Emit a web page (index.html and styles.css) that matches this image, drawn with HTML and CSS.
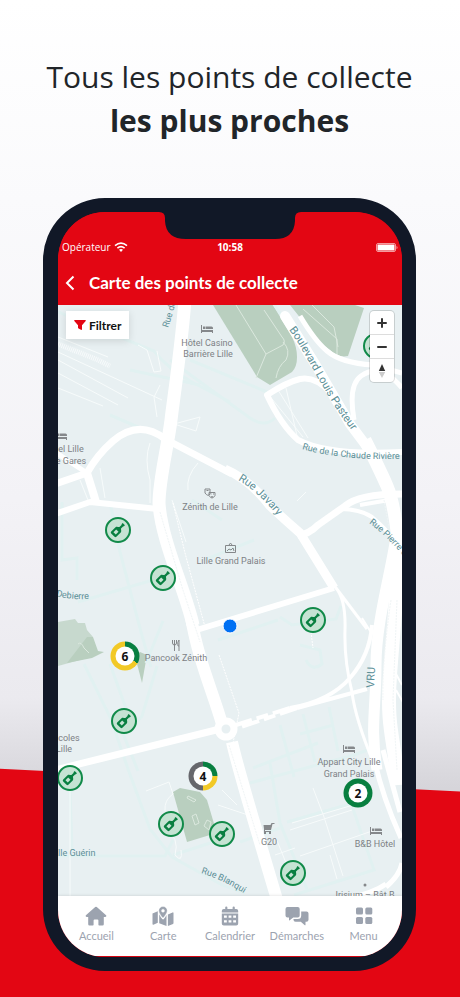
FILE: index.html
```html
<!DOCTYPE html>
<html lang="fr">
<head>
<meta charset="utf-8">
<meta name="viewport" content="width=device-width, initial-scale=1">
<title>Carte des points de collecte</title>
<link rel="stylesheet" href="styles.css">
</head>
<body>
<svg class="sprite" aria-hidden="true">
  <symbol id="bottle" viewBox="0 0 24 24">
    <g transform="rotate(45 12 12)">
      <path fill="#087f40" fill-rule="evenodd" d="M10.300 3h3.400v2h-.5v3.200c0 1.200 2.800 1.600 2.800 3.600v6.700a1.400 1.400 0 0 1-1.400 1.400H9.400A1.400 1.400 0 0 1 8 18.500v-6.700c0-2 2.800-2.400 2.800-3.600V5h-.5zM10.200 13v4.200h3.600V13z"/>
    </g>
  </symbol>
  <symbol id="bed" viewBox="0 0 14 10">
    <path fill="#85888b" d="M1 1h1v5h11v3h-1V8H2v1H1zM3 2.500h2.500V5H3zM6 2.500h5.500Q13 2.500 13 4v1H6z"/>
  </symbol>
</svg>
<main class="stage">
  <h1 class="headline">Tous les points de collecte <strong>les plus proches</strong></h1>

  <div class="phone">
    <svg class="notch" viewBox="0 0 142 29" aria-hidden="true"><path fill="#111827" d="M0 0h142v1q-6 0-6 6v3q-1 18-20 18H27Q7 28 6 10V7Q6 1 0 1z"/></svg>
    <div class="screen">
      <header class="top">
        <div class="status">
          <div class="carrier">
            <span>Opérateur</span>
            <svg width="14" height="10" viewBox="0 0 14 10" aria-hidden="true"><g fill="none" stroke="#fff" stroke-width="1.600"><path d="M1 3.700q6-5 12 0"/><path d="M3.400 6.200q3.600-3 7.200 0"/></g><path fill="#fff" d="M5 7.800q2-1.500 4 0L7 10z"/></svg>
          </div>
          <span class="clock">10:58</span>
          <svg class="battery" width="22" height="9" viewBox="0 0 22 9" aria-hidden="true"><rect x=".5" y=".5" width="19" height="8" rx="1.500" fill="none" stroke="#f59a9e"/><rect x="1.500" y="1.500" width="17" height="6" rx=".5" fill="#fff"/><path fill="#f59a9e" d="M20.500 3q1 0 1 1.500t-1 1.500z"/></svg>
        </div>
        <div class="titlebar">
          <button class="back" type="button" aria-label="Retour"><svg width="10" height="16" viewBox="0 0 10 16"><path d="M8.500 1.500 2 8l6.500 6.500" fill="none" stroke="#fff" stroke-width="2"/></svg></button>
          <h2 class="title">Carte des points de collecte</h2>
        </div>
      </header>

      <section class="map" aria-label="Carte">
        <svg class="ground" viewBox="58 305 344 591" preserveAspectRatio="xMidYMid slice">
          <defs>
            <path id="p-pasteur" d="M289 330C305 350 321 390 350 428L362 446"/>
            <path id="p-chaude" d="M302 449Q340 460 394 459L415 458"/>
            <path id="p-javary" d="M238 480Q257 491 276 514L284 526"/>
            <path id="p-pierre" d="M369 523Q390 538 412 567L425 586"/>
            <path id="p-blanqui" d="M201 873Q224 880 250 897"/>
            <path id="p-rued" d="M168 328Q174 311 179 290"/>
            <path id="p-debierre" d="M56 596Q75 601 98 598"/>
          </defs>
          <rect x="0" y="200" width="520" height="800" fill="#e8f0f2"/>

          <g fill="#b9cfbf">
            <path d="M213 305h60l19 32q5 10 5 20t-5 15l-22 13-13-8z"/>
            <path d="M290 305h65l9 3-16 48q-10 2-18-6-12-8-20-20z"/>
            <path opacity=".7" d="M58 622l17-3 3 4h7l2 7 6 7-6 21-29 8z"/>
            <path d="M67 663l20-26h6l5 14 6 1-12 6z"/>
            <path d="M135 656l5-4 7 3-5 28z"/>
            <path d="M173 792l7-4 20 4 7 8 8 27-5 8-23 7z"/>
          </g>

          <g fill="none" stroke="#e1f1f1" stroke-width="3">
            <path d="M58 312l96 39q14 18 38 31l38 20M170 360l80 58q15 10 25 0M190 360l77 32M273 303l50 72M110 502l10 50 21 80 10 35M62 502v58l15-2v22M78 602l75-22M84 664l27 55 17 50 22 60 22 28 50 28 23 8M110 664l18 50M157 666l-15 50-13 15M146 663l17-42M58 856h107l8-16M70 790l2 60M118 721l20 50"/>
            <path d="M253 768l65-25M250 783l104-28 22-8M270 763l10 60 27 66M287 822l70-20M280 725l14 52M303 714l12 48M300 734l34-9M329 707l9 44M240 842l40-14M173 855l56-18M350 800l24 70-80 25M300 645l20 5 2 14q-10 8-16-4M280 617l12 8 44-6 5-13"/>
            <path d="M218 640l60-20M130 370l70 15M110 415l35 15M192 500l30 20M204 560l50-20"/>
          </g>
          <path d="M58 344l40 16 12 6" fill="none" stroke="#f7fafb" stroke-width="5" stroke-dasharray="1 1"/>
          <g fill="none" stroke="#f7fbfb" stroke-width="1">
            <path d="M58 337l50 20M58 352l104 48M58 360l70 38M58 373l60 32M58 388l45 18M138 345l9 5 7 22 7-1-4-20M160 385l-6 12 3 20M174 424l26-7-4 14-22-7M150 443q-6 16 0 37v23M198 463q-12 13-10 27M172 500l14 42M100 468l5 30M80 480l8 20M278 390l30 48M286 388l12 52M268 394l35 43"/>
            <path d="M146 791l23-9 4 12q-9 6-8 17M165 828q15 10 10 27 8 9 6-5M70 790v106M292 823l68-20M290 830l62-20M300 856l75-26M313 788l11 29 19 59M330 855l7 24M276 838l18 45M275 855l20-7M297 501l9-9M218 805l30 10M222 790l15 15"/>
          </g>
          <g fill="none" stroke="#dbe8de" stroke-width="1"><path d="M236 305l30 49-10 24M266 354l17-9q3-4-1-8l-18-27M283 342q8 8 3 18-8 6-10 18M303 309l34 30v17M312 305l22 22 4 20M188 796l8 4-2 2-7-4zM192 816l4-2 3 9-4 2zM204 826l3-6 4 2-2 8zM78 644q3-3 6 4l5 5"/></g>

          <g fill="none" stroke="#fff" stroke-linejoin="round">
            <path stroke-width="13" d="M185 300C181 350 174 395 171 420S159 480 159 503C161 540 186 592 193 625"/>
            <path stroke-width="12" d="M191 617C198 660 214 695 222 724M232 742C238 770 258 835 278 903"/>
            <path stroke-width="7" d="M55 484l32-11q10-18 26-32 26-22 52-2L232 474"/>
            <path stroke-width="5" d="M55 452l32 21"/>
            <path stroke-width="8" d="M87 473l9 29"/>
            <path stroke-width="6" d="M55 514l35-12 68 7"/>
            <path stroke-width="9" d="M225 469Q250 480 270 506 285 520 300 533L334 588"/>
            <path stroke-width="6" d="M190 632L334 588"/>
            <path stroke-width="7" d="M55 770L220 729"/>
            <path stroke-width="7" d="M298 535q10 0 20-10l27-19q14-12 57-12"/>
            <path stroke-width="4" d="M340 509q20 0 32 8 14 12 30 31M360 505l35-6"/>
            <path stroke-width="3" d="M333 584l34 45M336 588q10 12 9 42t7 62q3 26 22 72"/>
            <path stroke-width="10" stroke-linecap="round" d="M285 316l30 48 35 60 27 36"/>
            <path stroke-width="13" d="M365 440Q380 470 387 486T398 540"/>
            <path stroke-width="5" d="M300 316q15 25 27 35 14 12 46 14l29 8M354 420q-6-35 7-44 20-14 41 12"/>
            <path stroke-width="6" d="M330 392q-15-16-30-13-13 3-33 16 14 30 31 45 30 16 104 12"/>
            <path stroke-width="11" d="M397 530C392 570 376 620 376 665S370 725 377 770"/>
            <path stroke-width="14" d="M398 530C399 580 394 620 390 675S395 740 398 785"/>
            <path stroke-width="5" d="M374 758q8 38 27 80M383 750l17 62M386 887q14-12 16-24M340 900q32-6 46-16"/>
            <path stroke-width="4" d="M372 625Q370 655 350 678T290 708M367 689l-70 19"/>
            <path stroke-width="4" stroke-dasharray="18 5 12 5" d="M290 708L236 725M297 708L238 728"/>
            <path stroke-width="2" d="M362 618l10 16M395 672l7 13M396 690l8 14"/>
          </g>
          <g fill="none" stroke="#f0f5f6" stroke-dasharray="2 1"><path d="M384 500l8 45M391 600q-9 60-8 100M397 600l-4 100 4 70M160 512l22 75 18 55M229 745l31 100"/></g>
          <path d="M173 503l12 50 20 74M219 655l20 58-6 30M311 632l2 16" fill="none" stroke="#fff" stroke-dasharray="2 1"/>
          <circle cx="226" cy="729" r="8" fill="#e8f0f2" stroke="#fff" stroke-width="7"/>

          <g class="place" text-anchor="middle">
            <text x="207" y="346">Hôtel Casino</text><text x="208" y="357">Barrière Lille</text>
            <text x="210" y="510">Zénith de Lille</text>
            <text x="231" y="564">Lille Grand Palais</text>
            <text x="176" y="661">Pancook Zénith</text>
            <text x="349" y="765">Appart City Lille</text><text x="349" y="777">Grand Palais</text>
            <text x="269" y="845">G20</text>
            <text x="375" y="847">B&amp;B Hôtel</text>
            <text x="365" y="898">Irisium – Bât B</text>
            <text x="71" y="452">el Lille</text><text x="71" y="464">e Gares</text>
            <text x="69" y="741">coles</text><text x="64" y="752">Lille</text>
          </g>
          <g class="street">
            <text x="58" y="856">lle Guérin</text>
            <text><textPath href="#p-debierre">Debierre</textPath></text>
            <text><textPath href="#p-chaude">Rue de la Chaude Rivière</textPath></text>
            <text><textPath href="#p-pierre">Rue Pierre de</textPath></text>
            <text><textPath href="#p-rued">Rue de</textPath></text>
            <text><textPath href="#p-blanqui">Rue Blanqui</textPath></text>
            <text class="avenue"><textPath href="#p-pasteur">Boulevard Louis Pasteur</textPath></text>
            <text class="avenue"><textPath href="#p-javary">Rue Javary</textPath></text>
            <text class="avenue" transform="translate(374 688) rotate(-87)">VRU</text>
          </g>

          <use href="#bed" x="200" y="324" width="14" height="10"/>
          <use href="#bed" x="54" y="431" width="14" height="10"/>
          <use href="#bed" x="342" y="744" width="14" height="10"/>
          <use href="#bed" x="369" y="826" width="14" height="10"/>
          <g fill="none" stroke="#85888b">
            <path d="M205 489h5v5q-2 3-5-1zM209 492.500h6v3q-3 5-6 0zM206.500 490.500h2M210.500 494h1M213 494h1M211 497q1-1 2 0"/>
            <path d="M225.500 545.500h10v7h-10zM229 545l1.500-2 1.500 2M227 551l2-2 2 1 2-2 1 3"/>
            <path d="M172.500 640v3q0 2 2 2t2-2v-3M174.500 640v11M179 651v-11q-2 2-1 6h1"/>
          </g>
          <path fill="#85888b" d="M263.500 825h7l1-2h3v1h-2l-1.500 6h-6v1h6v1h-7v-3zM264 832h2v2h-2zM269 832h2v2h-2z"/>
          <circle cx="365" cy="885" r="1.500" fill="#85888b"/>
        </svg>

        <button class="pin" style="--x:318;--y:41" type="button" aria-label="Point verre"><svg><use href="#bottle"/></svg></button>
        <button class="pin" style="--x:60;--y:225" type="button" aria-label="Point verre"><svg><use href="#bottle"/></svg></button>
        <button class="pin" style="--x:105;--y:273" type="button" aria-label="Point verre"><svg><use href="#bottle"/></svg></button>
        <button class="pin" style="--x:255;--y:315" type="button" aria-label="Point verre"><svg><use href="#bottle"/></svg></button>
        <button class="pin" style="--x:66;--y:416" type="button" aria-label="Point verre"><svg><use href="#bottle"/></svg></button>
        <button class="pin" style="--x:12;--y:473" type="button" aria-label="Point verre"><svg><use href="#bottle"/></svg></button>
        <button class="pin" style="--x:113;--y:519" type="button" aria-label="Point verre"><svg><use href="#bottle"/></svg></button>
        <button class="pin" style="--x:164;--y:529" type="button" aria-label="Point verre"><svg><use href="#bottle"/></svg></button>
        <button class="pin" style="--x:235;--y:568" type="button" aria-label="Point verre"><svg><use href="#bottle"/></svg></button>
        <button class="cluster third" style="--x:67;--y:351" type="button"><span>6</span></button>
        <button class="cluster mixed" style="--x:145;--y:471" type="button"><span>4</span></button>
        <button class="cluster" style="--x:300;--y:488" type="button"><span>2</span></button>
        <span class="me" style="--x:172;--y:321"></span>

        <button class="filter" type="button"><svg width="12" height="10" viewBox="0 0 12 10" aria-hidden="true"><path fill="#e30613" d="M.8 0h10.400q1 .3.500 1L8 5.300V9.500q-.3.700-1 .3L4.500 8.500q-.5-.3-.5-1V5.300L.3 1Q-.2.300.8 0z"/></svg>Filtrer</button>
        <div class="controls">
          <button type="button" aria-label="Zoomer"><svg width="10" height="10" viewBox="0 0 10 10"><path d="M5 1v8M1 5h8" stroke="#333" stroke-width="2" stroke-linecap="round"/></svg></button>
          <button type="button" aria-label="Dézoomer"><svg width="10" height="10" viewBox="0 0 10 10"><path d="M1 5h8" stroke="#333" stroke-width="2" stroke-linecap="round"/></svg></button>
          <button type="button" aria-label="Orienter au nord"><svg width="8" height="16" viewBox="0 0 8 16"><path fill="#333" d="M.8 8 4 1l3.200 7z"/><path fill="#ccc" d="M.8 9h6.400L4 15z"/></svg></button>
        </div>
      </section>

      <nav class="tabs">
        <a href="#accueil"><svg width="22" height="20" viewBox="0 0 22 20"><path d="M10.200 1q.8-.7 1.600 0l9.300 8.300q.6.700 0 1.200-.3.400-.8.400h-1.500v7.300q0 1.300-1.300 1.300h-3.300q-.8 0-.8-.8v-4.200q0-1-1-1H9.600q-1 0-1 1v4.200q0 .8-.8.800H4.500q-1.300 0-1.300-1.300v-7.300H1.700q-.5 0-.8-.4-.6-.5 0-1.200z"/></svg>Accueil</a>
        <a href="#carte"><svg width="22" height="20" viewBox="0 0 22 20"><path d="M.5 7.500 5.800 5.300v11.400L1.400 18.700q-.9.200-.9-.7zM21.500 7v10q0 .6-.5.900l-5.100 2V8.500l4.700-2.100q.9-.2.900.6zM7.200 8.200q1.100 2.600 3 4.800.9.800 1.700 0 1.500-1.800 2.600-4v10.900l-7.300-2.700z"/><path fill-rule="evenodd" d="M11 .5a4.200 4.200 0 0 1 4.200 4.200c0 2.300-3 6.100-3.700 6.900q-.5.500-1 0C9.800 10.800 6.800 7 6.800 4.700A4.200 4.200 0 0 1 11 .5zm0 2.700a1.500 1.500 0 1 0 0 3 1.500 1.500 0 0 0 0-3z" stroke="#fff" stroke-width=".4"/></svg>Carte</a>
        <a href="#calendrier"><svg width="22" height="20" viewBox="0 0 22 20"><path fill-rule="evenodd" d="M6.200 1.500a1.100 1.100 0 0 1 2.200 0V3h5.200V1.500a1.100 1.100 0 0 1 2.200 0V3h1.400q2 0 2 2v1.400H2.800V5q0-2 2-2h1.400zM2.800 7.600h16.400v9.900q0 2-2 2H4.800q-2 0-2-2zM5 9.500v2.300h2.800V9.500zm4.600 0v2.300h2.800V9.500zm4.600 0v2.300H17V9.500zM5 14.200v2.300h2.800v-2.300zm4.600 0v2.300h2.800v-2.300zm4.600 0v2.300H17v-2.300z"/></svg>Calendrier</a>
        <a href="#demarches"><svg width="24" height="20" viewBox="0 0 24 20"><path d="M2.500 1h10.200q2 0 2 2v6.500q0 2-2 2H8.200l-3.500 2.800q-.7.400-.7-.4v-2.400H2.500q-2 0-2-2V3q0-2 2-2z"/><path d="M16.200 5.500h5.300q2 0 2 2v6.300q0 2-2 2h-1v3q0 .8-.7.400l-4-3.400h-5.300q-2 0-2-2V13h4.200q3.500 0 3.500-3.500z"/></svg>Démarches</a>
        <a href="#menu"><svg width="22" height="20" viewBox="0 0 22 20"><rect x="3" y="1.500" width="7" height="7" rx="1.500"/><rect x="12.300" y="1.500" width="7" height="7" rx="1.500"/><rect x="3" y="11" width="7" height="7" rx="1.500"/><rect x="12.300" y="11" width="7" height="7" rx="1.500"/></svg>Menu</a>
      </nav>
    </div>
  </div>
</main>
</body>
</html>
```
FILE: styles.css
```css
* { box-sizing: border-box; }

body {
  margin: 0;
  font-family: Lato, "Open Sans", sans-serif;
}

button {
  margin: 0;
  padding: 0;
  border: 0;
  background: none;
  font: inherit;
  color: inherit;
}

svg { flex: none; }

.sprite {
  position: absolute;
  width: 0;
  height: 0;
}

.stage {
  position: relative;
  display: flex;
  flex-direction: column;
  min-height: 100vh;
  padding: 55px 44px 26px 43px;
  overflow: hidden;
  background: linear-gradient(#fff 0%, #fafafc 20%, #f3f2f6 50%, #ebeaef 70%, #d6d5da 79%);
}

.stage::before {
  content: "";
  position: absolute;
  inset: 0;
  background: #e30613;
  clip-path: polygon(0 77.1%, 100% 79.4%, 100% 100%, 0 100%);
}

.headline {
  position: relative;
  margin: 0 0 55px;
  font-family: "Open Sans", sans-serif;
  font-size: 30px;
  font-weight: 400;
  line-height: 44px;
  text-align: center;
  white-space: nowrap;
  color: #212529;
}

.headline strong {
  display: block;
  font-weight: 700;
}

.phone {
  position: relative;
  display: flex;
  flex: 1;
  border: solid #111827;
  border-width: 14px 14px 14px 15px;
  border-radius: 62px;
  background: #e30613;
}

.notch {
  position: absolute;
  z-index: 2;
  top: -1px;
  left: 50%;
  width: 142px;
  height: 29px;
  transform: translateX(-50%);
}

.screen {
  display: flex;
  flex: 1;
  flex-direction: column;
  min-width: 0;
  padding-bottom: 1px;
  overflow: hidden;
  border-radius: 47px;
  background: #e30613;
}

.top { color: #fff; }

.status {
  display: grid;
  grid-template-columns: 1fr auto 1fr;
  align-items: center;
  padding: 26px 4px 5px 4px;
  font-family: "Open Sans", sans-serif;
  font-size: 10px;
  line-height: 18px;
}

.carrier {
  display: flex;
  align-items: center;
  gap: 3px;
}

.clock { font-weight: 700; }

.battery { justify-self: end; }

.titlebar {
  display: flex;
  align-items: center;
  gap: 14px;
  height: 44px;
  padding: 0 7px;
}

.back {
  display: flex;
}

.title {
  margin: 0;
  font-size: 17px;
  font-weight: 700;
  line-height: 24px;
}

.map {
  position: relative;
  flex: 1;
  min-height: 480px;
  overflow: hidden;
}

.ground {
  position: absolute;
  inset: 0;
  width: 100%;
  height: 100%;
}

.place,
.street {
  font-family: Roboto, sans-serif;
  font-size: 9px;
  fill: #7d8185;
}

.street { fill: #5b8f97; }

.avenue { font-size: 11px; }

.pin,
.cluster,
.me {
  position: absolute;
  top: calc(var(--y) * 1px);
  left: calc(var(--x) * 1px);
  border-radius: 50%;
  transform: translate(-50%, -50%);
}

.pin {
  width: 26px;
  height: 26px;
  border: 2px solid #118a49;
  background: #c5e3d3;
}

.pin svg {
  display: block;
  width: 22px;
  height: 22px;
}

.cluster {
  display: grid;
  place-items: center;
  width: 29px;
  height: 29px;
  background: #087f40;
}

.third { background: conic-gradient(#087f40 0 120deg, #f2c926 120deg); }

.mixed { background: conic-gradient(#087f40 0 90deg, #f2c926 90deg 180deg, #66676c 180deg); }

.cluster span {
  width: 19px;
  height: 19px;
  border-radius: 50%;
  background: #fff;
  font-family: "Open Sans", sans-serif;
  font-size: 12px;
  font-weight: 700;
  line-height: 19px;
  color: #111;
}

.me {
  width: 15px;
  height: 15px;
  border: 1px solid #fff;
  background: #0070f3;
}

.filter {
  position: absolute;
  top: 6px;
  left: 8px;
  display: flex;
  align-items: center;
  gap: 3px;
  height: 28px;
  padding: 0 8px;
  background: #fff;
  box-shadow: 0 2px 8px rgba(0, 0, 0, 0.12);
  font-size: 12px;
  font-weight: 700;
  color: #111;
}

.controls {
  position: absolute;
  top: 6px;
  right: 8px;
  overflow: hidden;
  border-radius: 4px;
  background: #fff;
  box-shadow: 0 0 0 1px rgba(0, 0, 0, 0.14);
}

.controls button {
  display: grid;
  place-items: center;
  width: 24px;
  height: 23px;
}

.controls button + button {
  height: 24px;
  border-top: 1px solid #ddd;
}

.tabs {
  position: relative;
  display: flex;
  height: 60px;
  padding: 10px 5px 0;
  background: #fff;
  box-shadow: 0 0 3px rgba(0, 0, 0, 0.15);
}

.tabs a {
  display: flex;
  flex: 1;
  flex-direction: column;
  align-items: center;
  gap: 2px;
  min-width: 0;
  font-size: 11px;
  line-height: 16px;
  text-decoration: none;
  color: #9ca3af;
  fill: #9ca3af;
}
```
